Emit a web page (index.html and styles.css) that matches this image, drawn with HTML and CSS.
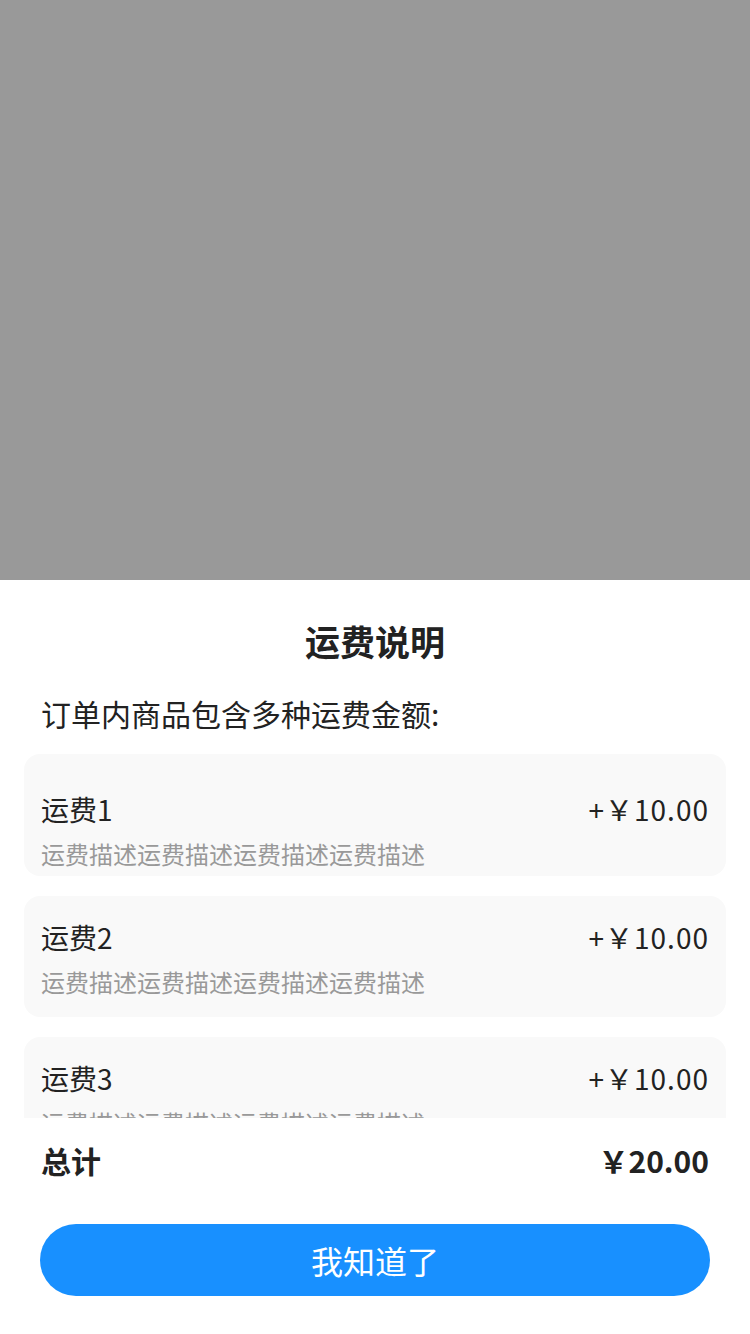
FILE: index.html
```html
<!DOCTYPE html>
<html lang="zh-CN">
<head>
    <meta charset="UTF-8">
    <meta name="viewport" content="width=device-width, initial-scale=1.0">
    <title>运费说明</title>
    <link rel="stylesheet" href="styles.css">
</head>
<body>
    <div class="mask"></div>
    <div class="sheet">
        <h2 class="sheet-title">运费说明</h2>
        <p class="sheet-tip">订单内商品包含多种运费金额:</p>

        <div class="fee-list">
            <div class="fee-card first">
                <div class="fee-row">
                    <span class="fee-name">运费1</span>
                    <span class="fee-price">+￥10.00</span>
                </div>
                <div class="fee-desc">运费描述运费描述运费描述运费描述</div>
            </div>
            <div class="fee-card">
                <div class="fee-row">
                    <span class="fee-name">运费2</span>
                    <span class="fee-price">+￥10.00</span>
                </div>
                <div class="fee-desc">运费描述运费描述运费描述运费描述</div>
            </div>
            <div class="fee-card">
                <div class="fee-row">
                    <span class="fee-name">运费3</span>
                    <span class="fee-price">+￥10.00</span>
                </div>
                <div class="fee-desc">运费描述运费描述运费描述运费描述</div>
            </div>
        </div>

        <div class="total-row">
            <span>总计</span>
            <span>￥20.00</span>
        </div>

        <div class="footer">
            <button class="ok-btn">我知道了</button>
        </div>
    </div>
</body>
</html>
```

FILE: styles.css
```css
* {
    box-sizing: border-box;
}

html, body {
    margin: 0;
    height: 100%;
}

body {
    display: flex;
    flex-direction: column;
    background-color: #999999;
    font-family: "Noto Sans CJK SC", "Noto Sans", sans-serif;
    color: #222222;
}

.mask {
    height: 580px;
    flex-shrink: 0;
}

.sheet {
    flex: 1;
    background: #ffffff;
    display: flex;
    flex-direction: column;
    padding-top: 39px;
}

.sheet-title {
    margin: 0;
    font-size: 35px;
    line-height: 44px;
    font-weight: 600;
    text-align: center;
}

.sheet-tip {
    margin: 30px 0 0;
    padding: 0 41px;
    font-size: 30px;
    line-height: 40px;
}

.fee-list {
    margin-top: 21px;
    height: 364px;
    overflow: hidden;
    padding: 0 24px;
    display: flex;
    flex-direction: column;
    gap: 20px;
}

.fee-card {
    flex-shrink: 0;
    height: 121px;
    background: #f9f9f9;
    border-radius: 16px;
    padding: 21px 17px 0;
}

.fee-card.first {
    height: 122px;
    padding-top: 35px;
}

.fee-row {
    display: flex;
    justify-content: space-between;
    align-items: center;
    font-size: 28px;
    line-height: 40px;
}

.fee-price {
    letter-spacing: 1px;
}

.fee-desc {
    margin-top: 8px;
    font-size: 24px;
    line-height: 34px;
    color: #999999;
}

.total-row {
    display: flex;
    justify-content: space-between;
    padding: 0 41px;
    margin-top: 21px;
    font-size: 30px;
    line-height: 42px;
    font-weight: 600;
}

.footer {
    padding: 43px 40px 38px;
}

.ok-btn {
    display: block;
    width: 100%;
    height: 72px;
    border: none;
    border-radius: 36px;
    background: #1890ff;
    color: #ffffff;
    font-family: inherit;
    font-size: 32px;
}
```
